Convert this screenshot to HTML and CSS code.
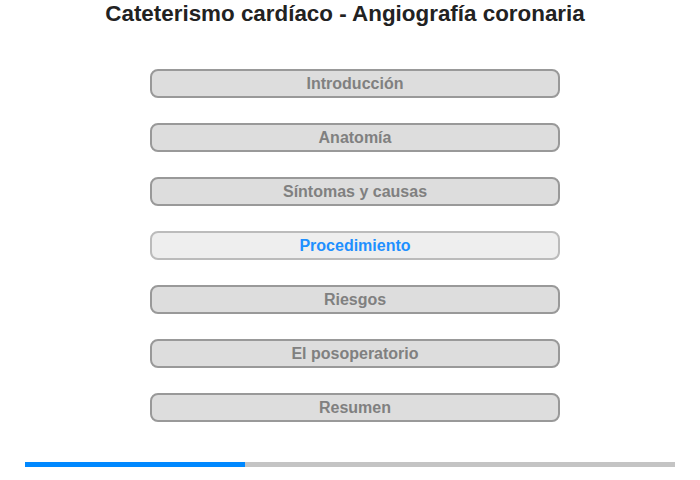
FILE: index.html
```html
<!DOCTYPE html>
<html lang="es">
<head>
  <meta charset="UTF-8" />
  <title>Cateterismo cardíaco - Angiografía coronaria</title>
  <link rel="stylesheet" href="styles.css">
</head>
<body>
  <div class="page">
    <h1>Cateterismo cardíaco - Angiografía coronaria</h1>
    <nav class="chapters">
      <a class="chapter">Introducción</a>
      <a class="chapter">Anatomía</a>
      <a class="chapter">Síntomas y causas</a>
      <a class="chapter current">Procedimiento</a>
      <a class="chapter">Riesgos</a>
      <a class="chapter">El posoperatorio</a>
      <a class="chapter">Resumen</a>
    </nav>
    <div class="progress"><div class="progress-fill" style="width: 33.8%"></div></div>
  </div>
</body>
</html>
```

FILE: styles.css
```css
body {
  margin: 0;
  font-family: 'Liberation Sans', Arial, sans-serif;
  background: #fff;
}
.page {
  width: 700px;
  padding-top: 1px;
}
h1 {
  margin: 0;
  padding-right: 10px;
  text-align: center;
  font-size: 22.4px;
  line-height: 26px;
  font-weight: bold;
  color: #222;
}
.chapters {
  display: flex;
  flex-direction: column;
  align-items: center;
  gap: 25px;
  margin: 42px 0 0 10px;
}
.chapter {
  display: block;
  box-sizing: border-box;
  width: 410px;
  height: 29px;
  line-height: 25px;
  border: 2px solid #999;
  border-radius: 8px;
  background: #ddd;
  color: #808080;
  font-size: 16px;
  font-weight: bold;
  text-align: center;
}
.chapter.current {
  background: #eee;
  border-color: #bbb;
  color: #1e90ff;
}
.progress {
  margin: 40px 25px 0;
  height: 5px;
  background: #c4c4c4;
}
.progress-fill {
  height: 100%;
  background: #0088ff;
}
```
